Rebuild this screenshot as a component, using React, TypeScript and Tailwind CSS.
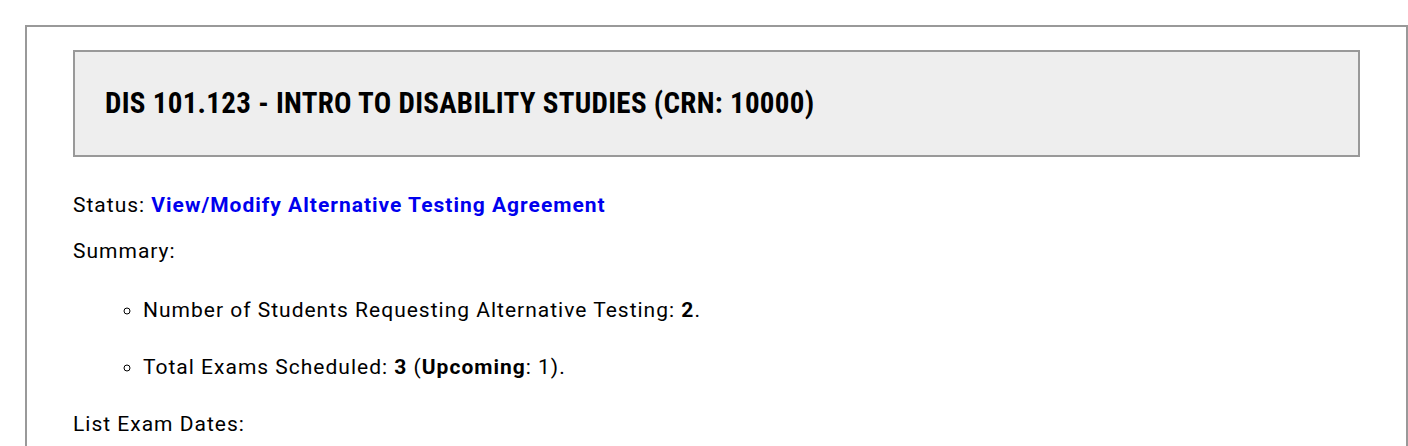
import React from 'react';

const body = { fontFamily: 'Roboto, "Liberation Sans", sans-serif' };
const heading = { fontFamily: '"Roboto Condensed", Roboto, "Liberation Sans Narrow", sans-serif', fontStretch: 'condensed' as const };

export default function App() {
  return (
    <div className="min-h-[446px] bg-white pt-[25px] pl-[25px] text-black" style={body}>
      <div className="border-2 border-[#999] border-b-0 px-[46px] pt-[23px] pb-10">
        <div className="flex h-[107px] items-center border-2 border-[#999] bg-[#eee] pl-[30px]">
          <h1 className="text-[29px] font-bold leading-none tracking-[0.3px]" style={heading}>
            DIS 101.123 - INTRO TO DISABILITY STUDIES (CRN: 10000)
          </h1>
        </div>

        <div className="mt-[33px] text-[21px] leading-[30px] tracking-[1px]">
          <p className="mb-4">
            Status: <a href="#" className="font-bold text-[#0000ee]">View/Modify Alternative Testing Agreement</a>
          </p>
          <p>Summary:</p>
          <ul className="mt-[15px] mb-[14px] list-[circle] pl-[70px]">
            <li className="py-[13.5px]">
              Number of Students Requesting Alternative Testing: <b>2</b>.
            </li>
            <li className="py-[13.5px]">
              Total Exams Scheduled: <b>3</b> (<b>Upcoming</b>: 1).
            </li>
          </ul>
          <p>List Exam Dates:</p>
        </div>
      </div>
    </div>
  );
}
